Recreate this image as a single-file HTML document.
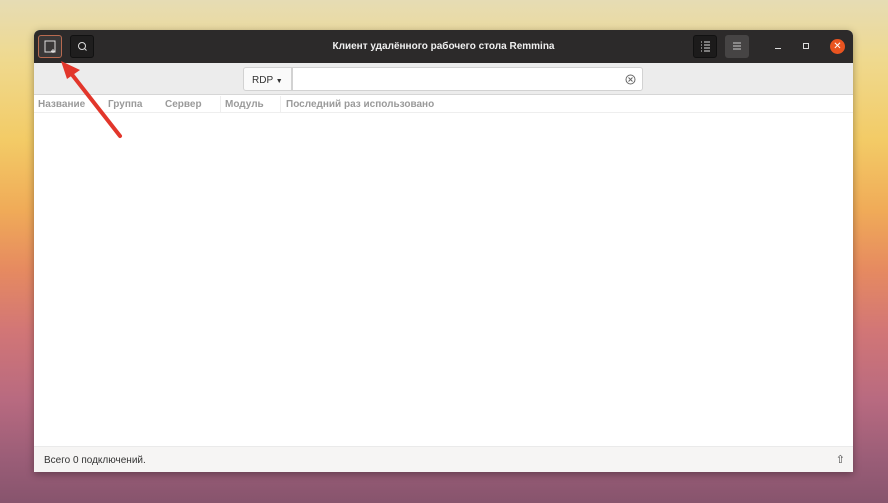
<!DOCTYPE html>
<html><head><meta charset="utf-8"><style>
*{margin:0;padding:0;box-sizing:border-box}
body{width:888px;height:503px;overflow:hidden;position:relative;font-family:"Liberation Sans",sans-serif;
background:linear-gradient(180deg,#e6dcb4 0px,#efd98e 60px,#f3cb66 140px,#f0ab58 210px,#e68a60 270px,#d27676 330px,#b86a80 400px,#9a5d77 460px,#87546d 503px);}
.win{position:absolute;left:34px;top:30px;width:819px;height:442px;background:#fff;border-radius:6px 6px 0 0;overflow:hidden;box-shadow:0 2px 8px rgba(0,0,0,.35)}
.tb{position:absolute;left:0;top:0;width:100%;height:33px;background:#2c2a2a}
.title{position:absolute;left:0;right:0;top:11px;text-align:center;color:#f0f0f0;font-size:10px;font-weight:bold}
.btn{position:absolute;top:5px;width:24px;height:23px;border-radius:3px}
.bar{position:absolute;top:33px;left:0;width:100%;height:32px;background:#ececec;border-bottom:1px solid #d6d6d6}
.hdr{position:absolute;top:66px;left:0;width:100%;height:17px;border-bottom:1px solid #eee;font-size:10px;color:#9a9a9a;font-weight:bold}
.hdr span{position:absolute;top:3px}
.status{position:absolute;bottom:0;left:0;width:100%;height:26px;background:#f6f5f4;border-top:1px solid #eaeaea;font-size:10px;color:#333}
</style></head><body>
<div class="win">
 <div class="tb">
  <div class="btn" style="left:4px;background:#3a3838;border:1px solid #b86a50"><svg width="22" height="21"><rect x="6" y="5" width="10" height="11" fill="none" stroke="#ddd" stroke-width="1"/><path d="M14 13v4M12 15h4" stroke="#ddd"/></svg></div>
  <div class="btn" style="left:36px;background:#1f1e1e;border:1px solid #111"><svg width="22" height="21"><circle cx="11" cy="10" r="3.5" fill="none" stroke="#ddd"/><path d="M13.5 12.5l2 2" stroke="#ddd"/></svg></div>
  <div class="title">Клиент удалённого рабочего стола Remmina</div>
  <div class="btn" style="left:659px;background:#1c1b1b;border:1px solid #111"><svg width="22" height="21"><path d="M7 6h1M7 9h1M7 12h1M7 15h1M10 6h6M10 9h6M10 12h6M10 15h6" stroke="#ddd"/></svg></div>
  <div class="btn" style="left:691px;background:#464444"><svg width="24" height="23"><path d="M8 8h8M8 11h8M8 14h8" stroke="#ccc"/></svg></div>
  <div style="position:absolute;left:741px;top:18px;width:6px;height:1px;background:#ddd"></div>
  <div style="position:absolute;left:769px;top:13px;width:6px;height:6px;border:1px solid #ddd"></div>
  <div style="position:absolute;left:796px;top:9px;width:15px;height:15px;border-radius:50%;background:#e95420;color:#fff;font-size:10px;text-align:center;line-height:15px">✕</div>
 </div>
 <div class="bar">
  <div style="position:absolute;left:209px;top:4px;width:49px;height:24px;background:#fafafa;border:1px solid #d2d2d2;border-radius:3px 0 0 3px;font-size:10px;color:#333;padding:7px 0 0 8px">RDP <span style="font-size:7px">▼</span></div>
  <div style="position:absolute;left:258px;top:4px;width:351px;height:24px;background:#fff;border:1px solid #d2d2d2;border-radius:0 3px 3px 0"><svg style="position:absolute;right:6px;top:6px" width="11" height="11"><circle cx="5.5" cy="5.5" r="4.5" fill="none" stroke="#666"/><path d="M3.5 3.5l4 4M7.5 3.5l-4 4" stroke="#666"/></svg></div>
 </div>
 <div class="hdr">
  <span style="left:4px">Название</span><span style="left:74px">Группа</span><span style="left:131px">Сервер</span><span style="left:191px">Модуль</span><span style="left:252px">Последний раз использовано</span>
  <div style="position:absolute;left:186px;top:0;width:1px;height:17px;background:#eee"></div>
  <div style="position:absolute;left:246px;top:0;width:1px;height:17px;background:#eee"></div>
 </div>
 <div class="status"><span style="position:absolute;left:10px;top:8px">Всего 0 подключений.</span><span style="position:absolute;right:8px;top:6px;font-size:11px;color:#444">⇧</span></div>
</div>
<svg style="position:absolute;left:0;top:0" width="888" height="503"><path d="M120 136L70 72" stroke="#e2362b" stroke-width="4" stroke-linecap="round"/><path d="M61 61L80 70L67 79Z" fill="#e2362b"/></svg>
</body></html>
